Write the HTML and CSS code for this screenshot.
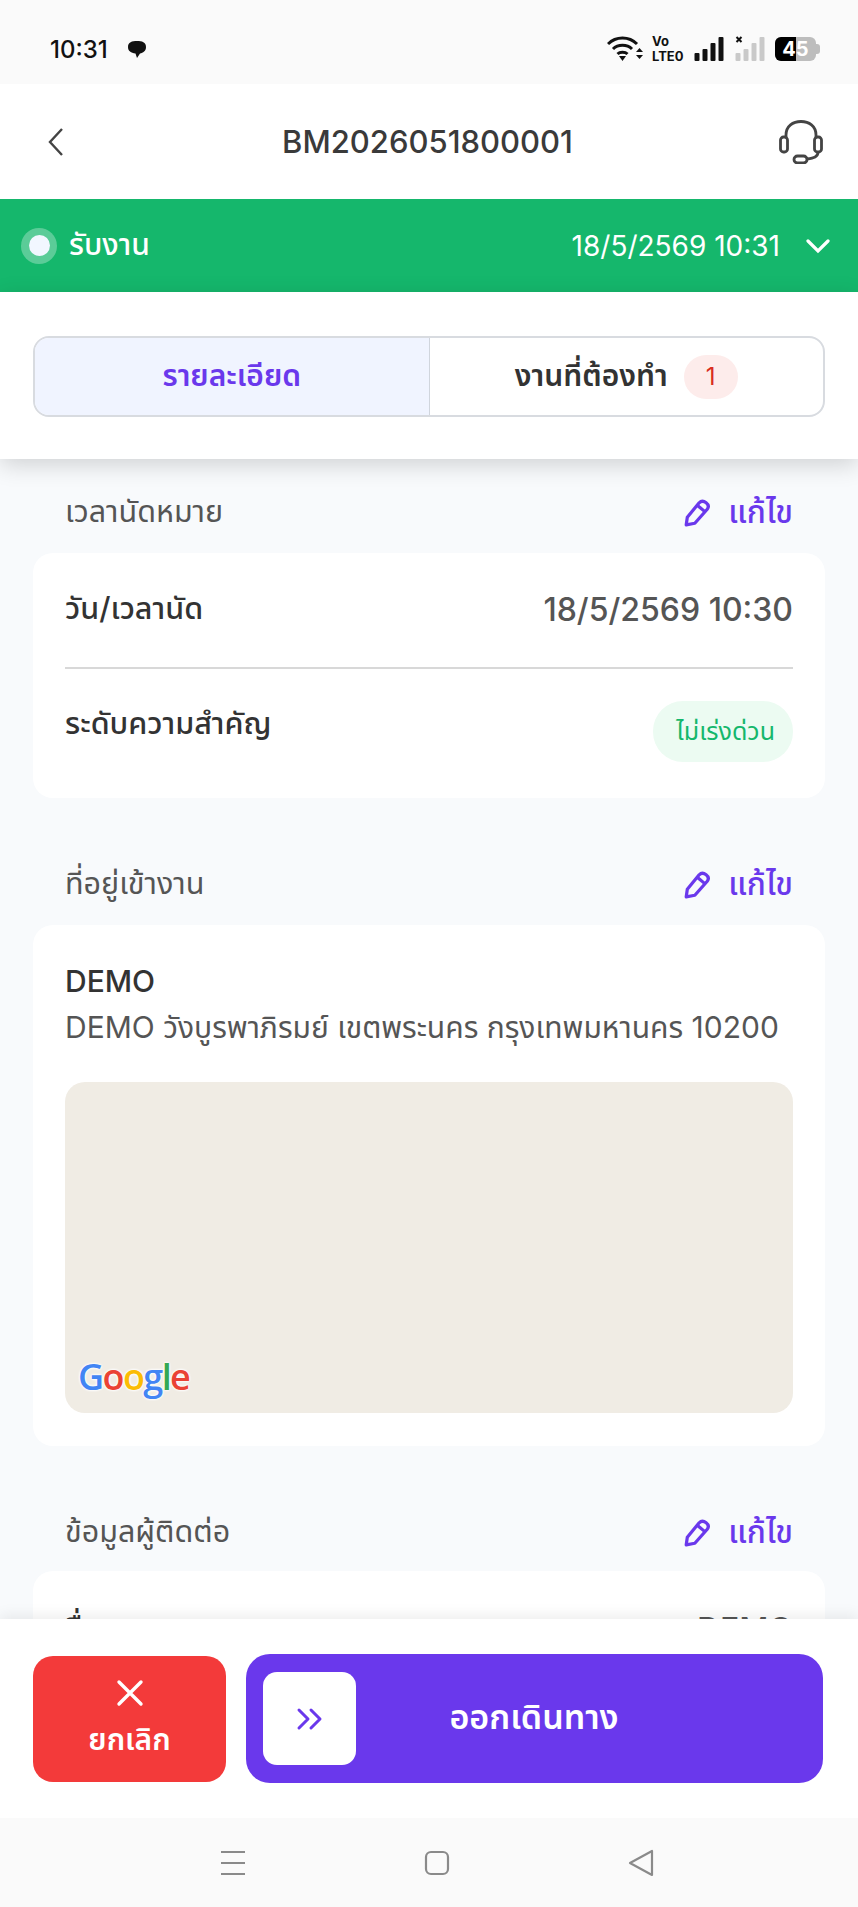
FILE: index.html
```html
<!DOCTYPE html>
<html lang="th">
<head>
<meta charset="utf-8">
<title>BM2026051800001</title>
<link rel="stylesheet" href="styles.css">
</head>
<body>
<div class="app">
  <div class="statusbar">
    <div class="status-left">
      <span class="clock">10:31</span>
      <svg class="notif" width="20" height="20" viewBox="0 0 20 20"><path d="M1 8 C1 3 5 2 10 2 C15 2 19 3 19 8 C19 12 16 14 13 14.500 L10 19 L8.500 14.500 C4 14 1 12 1 8Z" fill="#111"/></svg>
    </div>
    <div class="status-right">
      <svg width="37" height="28" viewBox="0 0 37 28" fill="none" stroke="#111" stroke-width="3"><path d="M1 9 C9 1 22 1 30 9"/><path d="M6 14 C11 9 20 9 25 14"/><path d="M10.500 19 C13 16.500 18 16.500 20.500 19"/><path d="M12 21 L15.500 26 L19 21 Z" fill="#111" stroke="none"/><path d="M29 17 L32.500 13 L36 17Z M29 20 L32.500 24 L36 20Z" fill="#111" stroke="none"/></svg>
      <span class="volte"><span>Vo</span><span>LTE0</span></span>
      <svg width="33" height="26" viewBox="0 0 32 26" fill="#111"><rect x="1" y="17" width="5" height="8" rx="1"/><rect x="9" y="13" width="5" height="12" rx="1"/><rect x="17" y="7" width="5" height="18" rx="1"/><rect x="25" y="1" width="5" height="24" rx="1"/></svg>
      <svg width="33" height="26" viewBox="0 0 32 26" fill="#c9c9c9"><path d="M2 1 L7 6 M7 1 L2 6" stroke="#111" stroke-width="2"/><rect x="1" y="17" width="5" height="8" rx="1"/><rect x="9" y="13" width="5" height="12" rx="1"/><rect x="17" y="7" width="5" height="18" rx="1"/><rect x="25" y="1" width="5" height="24" rx="1"/></svg>
      <div class="battery"><span class="battery-fill"></span><span class="battery-text">45</span><span class="battery-tip"></span></div>
    </div>
  </div>

  <header class="topbar">
    <svg class="back" width="18" height="30" viewBox="0 0 18 30" fill="none" stroke="#444" stroke-width="2.400"><path d="M15 2 L3 15 L15 28"/></svg>
    <h1 class="title">BM2026051800001</h1>
    <svg class="support" width="46" height="44" viewBox="0 0 46 44" fill="none" stroke="#444" stroke-width="2.800"><path d="M8 17 V15 C8 6 15 1.500 23 1.500 C31 1.500 38 6 38 15 V17"/><rect x="2.500" y="17" width="7" height="15" rx="3"/><rect x="36.500" y="17" width="7" height="15" rx="3"/><path d="M40 32 C40 37 36 38 29 39"/><rect x="16" y="36" width="13" height="7" rx="3.500"/></svg>
  </header>

  <div class="statusline">
    <div class="state">
      <span class="dot"><span class="dot-core"></span></span>
      <span>รับงาน</span>
    </div>
    <div class="state-time">
      <span>18/5/2569 10:31</span>
      <svg width="24" height="16" viewBox="0 0 24 16" fill="none" stroke="#fff" stroke-width="3.200" stroke-linecap="round"><path d="M2 3 L12 13 L22 3"/></svg>
    </div>
  </div>

  <div class="tabsbar">
    <div class="tabs">
      <div class="tab tab-active">รายละเอียด</div>
      <div class="tab">งานที่ต้องทำ <span class="count">1</span></div>
    </div>
  </div>

  <main class="content">
    <section class="section section-first">
      <div class="section-head">
        <span class="section-title">เวลานัดหมาย</span>
        <span class="edit"><svg width="26" height="28" viewBox="0 0 24 26" fill="none" stroke="#6a38ec" stroke-width="3" stroke-linejoin="round"><path d="M2 24 L3 17 L14 3.500 C16 1.500 18 1.500 20.500 3.500 C23 5.500 23 7.500 21.500 9.500 L10 22.500 Z"/><path d="M12.500 6 L19 11.500"/></svg>แก้ไข</span>
      </div>
      <div class="card">
        <div class="row row-line">
          <span class="row-label">วัน/เวลานัด</span>
          <span class="row-value">18/5/2569 10:30</span>
        </div>
        <div class="row row-pill">
          <span class="row-label">ระดับความสำคัญ</span>
          <span class="pill">ไม่เร่งด่วน</span>
        </div>
      </div>
    </section>

    <section class="section">
      <div class="section-head">
        <span class="section-title">ที่อยู่เข้างาน</span>
        <span class="edit"><svg width="26" height="28" viewBox="0 0 24 26" fill="none" stroke="#6a38ec" stroke-width="3" stroke-linejoin="round"><path d="M2 24 L3 17 L14 3.500 C16 1.500 18 1.500 20.500 3.500 C23 5.500 23 7.500 21.500 9.500 L10 22.500 Z"/><path d="M12.500 6 L19 11.500"/></svg>แก้ไข</span>
      </div>
      <div class="card card-address">
        <div class="place">DEMO</div>
        <div class="address">DEMO วังบูรพาภิรมย์ เขตพระนคร กรุงเทพมหานคร 10200</div>
        <div class="map">
          <span class="google"><span class="g-blue">G</span><span class="g-red">o</span><span class="g-yellow">o</span><span class="g-blue">g</span><span class="g-green">l</span><span class="g-red">e</span></span>
        </div>
      </div>
    </section>

    <section class="section section-contact">
      <div class="section-head">
        <span class="section-title">ข้อมูลผู้ติดต่อ</span>
        <span class="edit"><svg width="26" height="28" viewBox="0 0 24 26" fill="none" stroke="#6a38ec" stroke-width="3" stroke-linejoin="round"><path d="M2 24 L3 17 L14 3.500 C16 1.500 18 1.500 20.500 3.500 C23 5.500 23 7.500 21.500 9.500 L10 22.500 Z"/><path d="M12.500 6 L19 11.500"/></svg>แก้ไข</span>
      </div>
      <div class="card">
        <div class="row row-line">
          <span class="row-label">ชื่อ</span>
          <span class="row-value">DEMO</span>
        </div>
      </div>
    </section>
  </main>

  <footer class="actions">
    <button class="btn-cancel">
      <svg width="28" height="28" viewBox="0 0 28 28" fill="none" stroke="#fff" stroke-width="3.400" stroke-linecap="round"><path d="M3 3 L25 25 M25 3 L3 25"/></svg>
      <span>ยกเลิก</span>
    </button>
    <button class="btn-go">
      <span class="slider"><svg width="28" height="24" viewBox="0 0 28 24" fill="none" stroke="#6a38ec" stroke-width="3" stroke-linecap="round" stroke-linejoin="round"><path d="M3 3 L12 12 L3 21"/><path d="M15 3 L24 12 L15 21"/></svg></span>
      <span class="go-label">ออกเดินทาง</span>
    </button>
  </footer>

  <nav class="navbar">
    <svg width="28" height="28" viewBox="0 0 28 28" fill="none" stroke="#8a8a8a" stroke-width="2.200"><path d="M2 3 H26 M2 14 H26 M2 25 H26"/></svg>
    <svg width="28" height="28" viewBox="0 0 28 28" fill="none" stroke="#8a8a8a" stroke-width="2.200"><rect x="3" y="3" width="22" height="22" rx="5"/></svg>
    <svg width="28" height="28" viewBox="0 0 28 28" fill="none" stroke="#8a8a8a" stroke-width="2.200" stroke-linejoin="round"><path d="M25 2 V26 L3 14 Z"/></svg>
  </nav>
</div>
</body>
</html>
```

FILE: styles.css
```css
* { box-sizing: border-box; }
html, body { margin: 0; padding: 0; }
body { font-family: Inter, "Noto Sans", "Noto Sans Thai", "Noto Sans CJK SC", sans-serif; color: #333; }
.app { width: 858px; height: 1907px; display: flex; flex-direction: column; overflow: hidden; background: #f8fafc; }

.statusbar { height: 84px; flex: none; background: #fafafa; display: flex; justify-content: space-between; align-items: center; padding: 14px 38px 0 50px; }
.status-left { display: flex; align-items: center; gap: 19px; }
.clock { font-size: 24px; font-weight: 500; color: #111; }
.status-right { display: flex; align-items: center; gap: 8px; }
.volte { display: flex; flex-direction: column; font-size: 13px; line-height: 15px; font-weight: 700; color: #111; width: 33px; white-space: nowrap; }
.battery { position: relative; width: 41px; height: 24px; border-radius: 6px; background: #bdbdbd; margin-right: 4px; }
.battery-fill { position: absolute; left: 0; top: 0; bottom: 0; width: 21px; background: #000; border-radius: 6px 0 0 6px; }
.battery-text { position: absolute; inset: 0; text-align: center; font-size: 20px; line-height: 24px; font-weight: 700; color: #fff; }
.battery-tip { position: absolute; right: -4px; top: 7px; width: 4px; height: 10px; border-radius: 0 3px 3px 0; background: #bdbdbd; }

.topbar { height: 115px; flex: none; background: #fff; display: flex; align-items: center; justify-content: space-between; padding: 0 34px 0 47px; }
.title { margin: 0 0 0 12px; font-size: 31px; font-weight: 500; color: #3a3a3a; }

.statusline { height: 93px; flex: none; background: #15b76c; color: #fff; display: flex; justify-content: space-between; align-items: center; padding: 0 28px 0 21px; font-size: 28px; }
.state { display: flex; align-items: center; gap: 12px; font-weight: 500; font-size: 30px; }
.dot { width: 36px; height: 36px; border-radius: 50%; background: rgba(255,255,255,.3); display: flex; align-items: center; justify-content: center; }
.dot-core { width: 21px; height: 21px; border-radius: 50%; background: #f2f7ff; }
.state-time { display: flex; align-items: center; gap: 26px; }

.tabsbar { height: 167px; flex: none; background: #fff; padding: 44px 33px 0; position: relative; z-index: 2; box-shadow: 0 6px 22px rgba(0,0,0,.16); }
.tabs { display: flex; height: 81px; border: 2px solid #d8dbe0; border-radius: 16px; overflow: hidden; }
.tab { flex: 1; display: flex; align-items: center; justify-content: center; gap: 16px; font-size: 30px; font-weight: 600; color: #333; }
.tab-active { background: #f0f4ff; color: #6a38ec; border-right: 1px solid #d0d5dd; }
.count { width: 54px; height: 44px; border-radius: 22px; background: #fdeceb; color: #d92d20; font-size: 24px; font-weight: 400; display: flex; align-items: center; justify-content: center; }

.content { flex: 1; min-height: 0; overflow: hidden; padding: 0 33px; }
.section { margin-top: 61px; }
.section-first { margin-top: 28px; }
.section-head { display: flex; justify-content: space-between; align-items: center; padding: 0 32px; height: 52px; margin-bottom: 14px; }
.section-contact .section-head { margin-bottom: 12px; }
.section-title { font-size: 30.500px; color: #555; }
.edit { display: flex; align-items: center; gap: 18px; font-size: 31.500px; font-weight: 500; color: #6a38ec; }
.card { background: #fff; border-radius: 20px; padding: 0 32px; }
.row { display: flex; justify-content: space-between; align-items: flex-start; }
.row-line { height: 116px; padding-top: 33px; border-bottom: 2px solid #d8d8d8; }
.row-pill { height: 129px; padding-top: 32px; }
.row-label { font-size: 30.500px; line-height: 44px; font-weight: 500; color: #333; }
.row-value { font-size: 32px; line-height: 44px; font-weight: 500; color: #555; padding-top: 2px; }
.section-contact .row-line { padding-top: 35px; }
.pill { height: 61px; padding: 0 18px 0 23px; border-radius: 30px; background: #ecfbf2; color: #15b76c; font-size: 25px; display: flex; align-items: center; }

.card-address { height: 521px; padding-top: 34px; }
.place { font-size: 30px; font-weight: 500; color: #333; line-height: 44px; }
.address { font-size: 30px; color: #555; line-height: 48px; white-space: nowrap; }
.map { height: 331px; margin-top: 31px; background: #f0ece4; border-radius: 20px; display: flex; align-items: flex-end; padding: 0 0 12px 13px; }
.google { font-family: "Open Sans", sans-serif; font-size: 36px; line-height: 48px; font-weight: 600; letter-spacing: -1.600px; text-shadow: 0 0 2px #fff, 0 0 3px #fff, 0 0 3px #fff; }
.g-blue { color: #4285f4; }
.g-red { color: #ea4335; }
.g-yellow { color: #fbbc05; }
.g-green { color: #34a853; }

.actions { height: 199px; flex: none; background: #fff; display: flex; gap: 20px; padding: 35px 35px 35px 33px; position: relative; z-index: 2; box-shadow: 0 -3px 14px rgba(0,0,0,.08); }
.btn-cancel { width: 193px; height: 126px; margin-top: 2px; padding: 5px 0 0; border: 0; border-radius: 20px; background: #f33a3a; color: #fff; font-family: inherit; font-size: 30px; font-weight: 600; display: flex; flex-direction: column; align-items: center; justify-content: center; gap: 11px; }
.btn-go { flex: 1; height: 129px; border: 0; border-radius: 24px; background: #6a38ec; color: #fff; font-family: inherit; display: flex; align-items: center; padding: 0 17px; }
.slider { width: 93px; height: 93px; flex: none; background: #fff; border-radius: 14px; display: flex; align-items: center; justify-content: center; }
.go-label { flex: 1; text-align: center; font-size: 34px; font-weight: 600; padding-right: 94px; }

.navbar { height: 89px; flex: none; background: #fafafa; display: flex; justify-content: center; align-items: center; gap: 176px; padding-left: 16px; position: relative; z-index: 2; }
```
